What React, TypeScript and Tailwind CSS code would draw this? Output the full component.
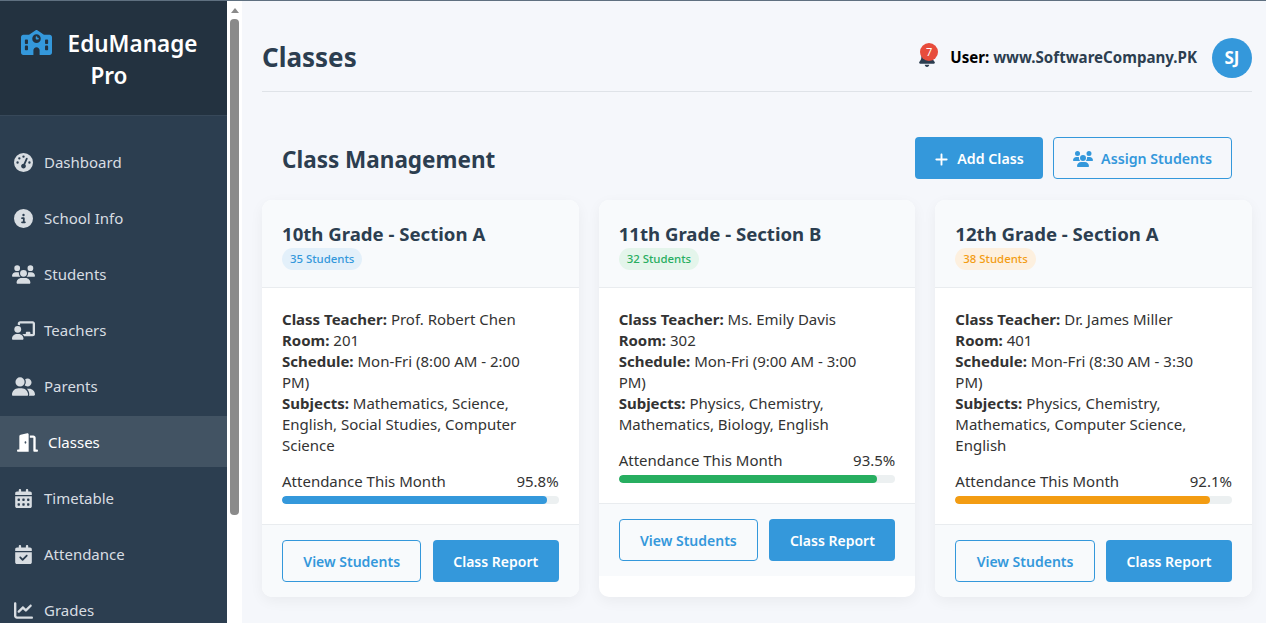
import {
  FaBell,
  FaCalendarCheck,
  FaCalendarDays,
  FaChalkboardUser,
  FaChartLine,
  FaCircleInfo,
  FaDoorOpen,
  FaGaugeHigh,
  FaPlus,
  FaSchool,
  FaUserGroup,
  FaUsers,
} from "react-icons/fa6";

const navItems = [
  { label: "Dashboard", icon: FaGaugeHigh, size: "text-[19px]" },
  { label: "School Info", icon: FaCircleInfo, size: "text-[19px]" },
  { label: "Students", icon: FaUsers, size: "text-[23px]" },
  { label: "Teachers", icon: FaChalkboardUser, size: "text-[23px]" },
  { label: "Parents", icon: FaUserGroup, size: "text-[23px]" },
  { label: "Classes", icon: FaDoorOpen, size: "text-[21px]", active: true },
  { label: "Timetable", icon: FaCalendarDays, size: "text-[19px]" },
  { label: "Attendance", icon: FaCalendarCheck, size: "text-[19px]" },
  { label: "Grades", icon: FaChartLine, size: "text-[19px]" },
];

const classes = [
  {
    title: "10th Grade - Section A",
    students: "35 Students",
    badge: "bg-[#e3f0fa] text-[#3498db]",
    bar: "bg-[#3498db] w-[95.8%]",
    teacher: "Prof. Robert Chen",
    room: "201",
    schedule: "Mon-Fri (8:00 AM - 2:00 PM)",
    subjects: "Mathematics, Science, English, Social Studies, Computer Science",
    attendance: "95.8%",
  },
  {
    title: "11th Grade - Section B",
    students: "32 Students",
    badge: "bg-[#e4f5eb] text-[#27ae60]",
    bar: "bg-[#27ae60] w-[93.5%]",
    teacher: "Ms. Emily Davis",
    room: "302",
    schedule: "Mon-Fri (9:00 AM - 3:00 PM)",
    subjects: "Physics, Chemistry, Mathematics, Biology, English",
    attendance: "93.5%",
  },
  {
    title: "12th Grade - Section A",
    students: "38 Students",
    badge: "bg-[#fdf0df] text-[#f39c12]",
    bar: "bg-[#f39c12] w-[92.1%]",
    teacher: "Dr. James Miller",
    room: "401",
    schedule: "Mon-Fri (8:30 AM - 3:30 PM)",
    subjects: "Physics, Chemistry, Mathematics, Computer Science, English",
    attendance: "92.1%",
  },
];

const Sidebar = () => (
  <aside className="w-[227px] shrink-0 bg-[#2c3e50] text-[#d8dde2] overflow-hidden">
    <div className="h-[115px] bg-[#233240] border-b border-[#374859] pt-[27px] pl-[18px] pr-[27px] text-center text-white text-[22.5px] font-semibold leading-[32px]">
      <FaSchool className="inline-block text-[#3498db] text-[31px] mr-[16px] -mt-[7px]" />
      EduManage Pro
    </div>
    <nav className="pt-5">
      {navItems.map((item) => {
        const Icon = item.icon;
        return (
          <div
            key={item.label}
            className={`h-[51px] mb-[5px] pt-[2px] flex items-center text-[15px] ${
              item.active ? "pl-[17px] bg-[#425363] text-white" : "pl-[13px]"
            }`}
          >
            <span className={`w-5 mr-[11px] flex justify-center ${item.size}`}>
              <Icon className="shrink-0" />
            </span>
            {item.label}
          </div>
        );
      })}
    </nav>
  </aside>
);

const Scrollbar = () => (
  <div className="w-[15px] shrink-0 bg-white flex flex-col items-center">
    <div className="mt-[7px] w-0 h-0 border-x-[4px] border-x-transparent border-b-[5px] border-b-[#8a8a8a]" />
    <div className="mt-[6px] w-[9px] h-[496px] rounded-[4px] bg-[#8a8a8a]" />
  </div>
);

const ClassCard = ({ item }: { item: (typeof classes)[number] }) => (
  <div className="bg-white rounded-[10px] shadow-[0_4px_14px_rgba(0,0,0,0.05)] overflow-hidden">
    <div className="h-[88px] bg-[#f8fafc] border-b border-[#e9ecef] px-5 pt-5">
      <h3 className="text-[18.6px] font-bold leading-[28px] text-[#2c3e50]">{item.title}</h3>
      <span className={`inline-block h-[22px] px-2 rounded-full text-[11.4px] leading-[22px] font-medium align-top ${item.badge}`}>
        {item.students}
      </span>
    </div>
    <div className="px-5 pt-[21px] pb-5 text-[15px] leading-[21px] text-[#333]">
      <div className="pr-[10px]">
        <div>
          <strong className="font-bold">Class Teacher:</strong> {item.teacher}
        </div>
        <div>
          <strong className="font-bold">Room:</strong> {item.room}
        </div>
        <div>
          <strong className="font-bold">Schedule:</strong> {item.schedule}
        </div>
        <div>
          <strong className="font-bold">Subjects:</strong> {item.subjects}
        </div>
      </div>
      <div className="mt-[15px] flex justify-between">
        <span>Attendance This Month</span>
        <span>{item.attendance}</span>
      </div>
      <div className="mt-1 h-2 rounded-full bg-[#ecf0f1] overflow-hidden">
        <div className={`h-full rounded-full ${item.bar}`} />
      </div>
    </div>
    <div className="bg-[#f8fafc] border-t border-[#e9ecef] px-5 py-[15px] flex justify-between">
      <button className="w-[50.4%] h-[42px] rounded-[4px] border border-[#3498db] text-[#3498db] text-[14px] font-semibold">
        View Students
      </button>
      <button className="w-[45.5%] h-[42px] rounded-[4px] bg-[#3498db] text-white text-[14px] font-semibold">
        Class Report
      </button>
    </div>
  </div>
);

export default function App() {
  return (
    <div className="h-screen overflow-hidden flex flex-col bg-[#f5f7fb] font-['Noto_Sans',sans-serif]">
      <div className="h-px bg-[#5f7080] shrink-0" />
      <div className="flex flex-1 min-h-0">
        <Sidebar />
        <Scrollbar />
        <main className="flex-1 min-w-0 pl-5 pr-[14px] pt-[37px]">
          <header className="h-[54px] pb-[13px] border-b border-[#dfe3e8] flex items-center justify-between">
            <h1 className="text-[26px] font-bold text-[#2c3e50] -mt-[1px]">Classes</h1>
            <div className="flex items-center">
              <div className="relative mr-[14px] text-[18px] text-[#2c3e50]">
                <FaBell />
                <span className="absolute -top-[6px] left-[2px] w-[18px] h-[18px] rounded-full bg-[#e74c3c] text-white text-[11px] leading-[18px] text-center">
                  7
                </span>
              </div>
              <div className="text-[15.1px] font-bold text-[#2c3e50] mr-[15px] -mt-[2px]">
                <span className="text-black">User:</span> www.SoftwareCompany.PK
              </div>
              <div className="w-10 h-10 rounded-full bg-[#3498db] text-white font-bold text-[17px] flex items-center justify-center">
                SJ
              </div>
            </div>
          </header>
          <section className="mt-[45px] mb-[21px] px-5 flex items-center justify-between">
            <h2 className="text-[22.5px] font-bold text-[#2c3e50] pt-1">Class Management</h2>
            <div className="flex gap-[10px]">
              <button className="w-[128px] h-[42px] pt-[2px] rounded-[4px] bg-[#3498db] text-white text-[14.2px] font-semibold flex items-center justify-center gap-2">
                <FaPlus className="text-[15px]" />
                Add Class
              </button>
              <button className="w-[179px] h-[42px] pt-[2px] rounded-[4px] border border-[#3498db] text-[#3498db] text-[14.2px] font-semibold flex items-center justify-center gap-2">
                <FaUsers className="text-[20px]" />
                Assign Students
              </button>
            </div>
          </section>
          <div className="grid grid-cols-3 gap-5">
            {classes.map((item) => (
              <ClassCard key={item.title} item={item} />
            ))}
          </div>
        </main>
      </div>
    </div>
  );
}
